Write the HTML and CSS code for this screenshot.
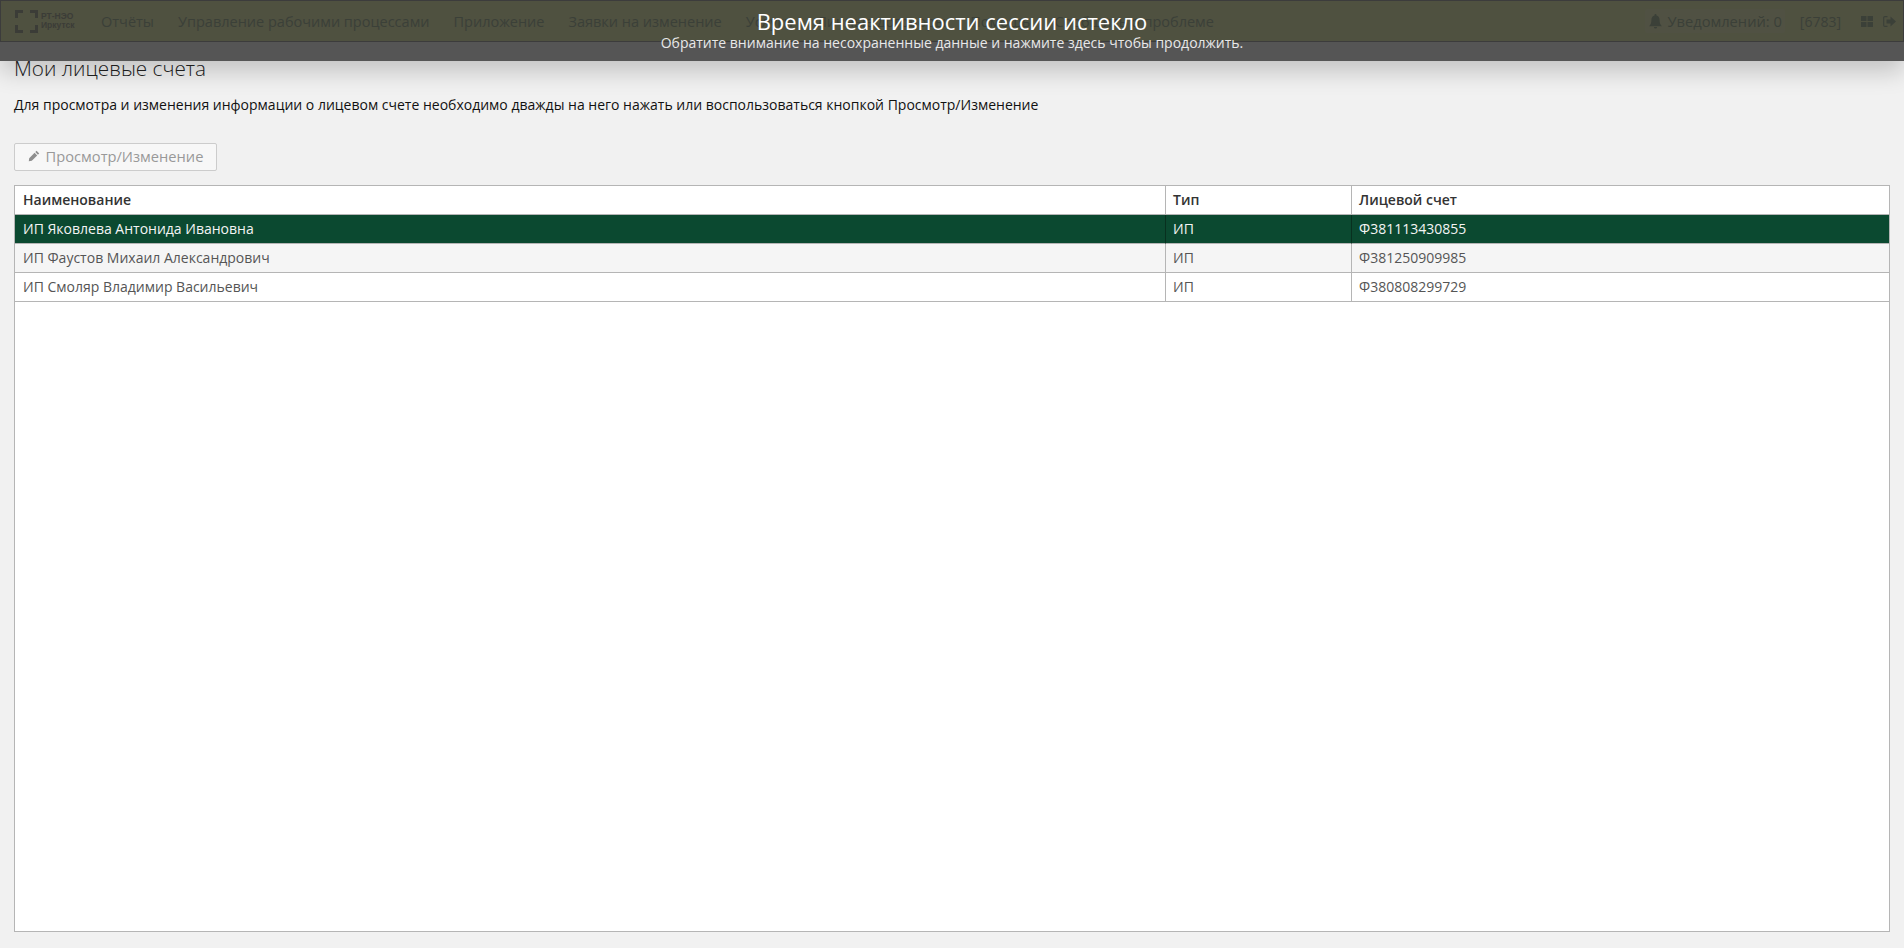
FILE: index.html
```html
<!DOCTYPE html>
<html lang="en">

<head>
    <meta charset="UTF-8">
    <title>Мои лицевые счета</title>
    <link rel="stylesheet" href="styles.css">
</head>

<body>
    <div class="topbar">
        <a class="logo" href="#">
            <svg width="23" height="23" viewBox="0 0 23 23">
                <path d="M1.500 8V1.500H8M15 1.500h6.500V8M21.500 15v6.500H15M8 21.500H1.500V15" fill="none" stroke="#a8ab9c" stroke-width="3"/>
            </svg>
            <span class="logoText">РТ-НЭО<br>Иркутск</span>
        </a>
        <ul class="nav">
            <li>Отчёты</li>
            <li>Управление рабочими процессами</li>
            <li>Приложение</li>
            <li>Заявки на изменение</li>
            <li>Услуги</li>
            <li>Личные договоры</li>
            <li>Помощь</li>
            <li>Сообщить о проблеме</li>
        </ul>
        <div class="userBox">
            <span class="notice">
                <svg width="13" height="15" viewBox="0 0 13 15"><path d="M6.500 0c-.6 0-1 .4-1 1v.6C3.400 2.100 2.400 3.800 2.400 5.800c0 3.600-.8 5-2.400 6.400h13c-1.600-1.400-2.400-2.800-2.400-6.400 0-2-1-3.700-3.100-4.200V1c0-.6-.4-1-1-1zM4.900 13a1.600 1.600 0 0 0 3.200 0z" fill="#a7b5a0"/></svg>
                Уведомлений: 0
            </span>
            <span class="account">[6783]</span>
            <svg class="gridIcon" width="12" height="11" viewBox="0 0 12 11"><path d="M0 0h5.500v5H0zM6.500 0H12v5H6.500zM0 6h5.500v5H0zM6.500 6H12v5H6.500z" fill="#a7b5a0"/></svg>
            <svg class="exitIcon" width="13" height="11" viewBox="0 0 13 11"><path d="M4.500.7H1.800q-1.100 0-1.100 1.100v7.400q0 1.100 1.100 1.100h2.700" fill="none" stroke="#a7b5a0" stroke-width="1.200"/><path d="M7.500.5l5.500 5-5.500 5V7.500H3.500v-4h4z" fill="#a7b5a0"/></svg>
        </div>
    </div>

    <div class="sessionBox">
        <h3>Время неактивности сессии истекло</h3>
        <p>Обратите внимание на несохраненные данные и нажмите здесь чтобы продолжить.</p>
    </div>

    <div class="content">
        <h1>Мои лицевые счета</h1>
        <p class="hint">Для просмотра и изменения информации о лицевом счете необходимо дважды на него нажать или воспользоваться кнопкой Просмотр/Изменение</p>
        <a class="btn" href="#">
            <svg width="12" height="12" viewBox="0 0 12 12"><path d="M8.600.8l2.600 2.600-1.300 1.300-2.600-2.600zM6.600 2.800l2.600 2.600-5.400 5.400L.8 11.200l.4-3z" fill="#8e8e8e"/></svg>
            Просмотр/Изменение
        </a>
        <div class="gridBox">
            <table>
                <colgroup>
                    <col class="colName">
                    <col class="colType">
                    <col>
                </colgroup>
                <thead>
                    <tr>
                        <th>Наименование</th>
                        <th>Тип</th>
                        <th>Лицевой счет</th>
                    </tr>
                </thead>
                <tbody>
                    <tr class="active">
                        <td>ИП Яковлева Антонида Ивановна</td>
                        <td>ИП</td>
                        <td>Ф381113430855</td>
                    </tr>
                    <tr class="odd">
                        <td>ИП Фаустов Михаил Александрович</td>
                        <td>ИП</td>
                        <td>Ф381250909985</td>
                    </tr>
                    <tr>
                        <td>ИП Смоляр Владимир Васильевич</td>
                        <td>ИП</td>
                        <td>Ф380808299729</td>
                    </tr>
                </tbody>
            </table>
        </div>
    </div>
</body>

</html>
```

FILE: styles.css
```css
* {
    margin: 0;
    padding: 0;
    box-sizing: border-box;
    font-family: 'Open Sans', 'Noto Sans', sans-serif;
}

html,
body {
    height: 100%;
}

a {
    text-decoration: none;
}

body {
    background: #f1f1f1;
    display: flex;
    flex-direction: column;
    overflow: hidden;
    position: relative;
}

.topbar {
    height: 42px;
    flex: none;
    display: flex;
    align-items: center;
    padding: 0 7px 0 14px;
    background: #e0e4b6;
    border: 1px solid #aaa;
    color: #a7b5a0;
}

.logo {
    display: flex;
    align-items: center;
    gap: 3px;
    width: 86px;
    color: #a8ab9c;
}

.logoText {
    font-size: 8.500px;
    line-height: 9px;
    font-weight: bold;
    font-family: 'Liberation Sans', sans-serif;
}

.nav {
    display: flex;
    gap: 24px;
    list-style: none;
    font-size: 14.500px;
    white-space: nowrap;
}

.userBox {
    margin-left: auto;
    display: flex;
    align-items: center;
    font-size: 11pt;
}

.notice {
    display: flex;
    align-items: center;
    gap: 6px;
    height: 24px;
    padding: 0 3px 0 4px;
    background: rgba(255, 255, 255, .1);
    border-radius: 2px;
}

.account {
    margin-left: 15px;
    font-size: 14px;
}

.gridIcon {
    margin-left: 20px;
}

.exitIcon {
    margin-left: 10px;
}

.sessionBox {
    position: absolute;
    left: 0;
    top: 0;
    width: 100%;
    height: 61px;
    padding-top: 7px;
    background: rgba(0, 0, 0, .647);
    box-shadow: 0 10px 25px rgba(0, 0, 0, .2);
    text-align: center;
    color: #fff;
}

.sessionBox h3 {
    font-size: 22px;
    line-height: 28px;
    font-weight: normal;
}

.sessionBox p {
    font-size: 14px;
    line-height: 15px;
    color: #e8e8e8;
}

.content {
    flex: 1;
    min-height: 0;
    display: flex;
    flex-direction: column;
    align-items: flex-start;
    padding: 13px 14px 16px;
}

.content h1 {
    font-size: 20.700px;
    line-height: 27px;
    font-weight: 300;
    color: #222;
}

.hint {
    margin-top: 14px;
    font-size: 14px;
    line-height: 18px;
    color: #111;
}

.btn {
    margin-top: 29px;
    height: 28px;
    width: 203px;
    display: flex;
    align-items: center;
    justify-content: center;
    gap: 6px;
    padding-bottom: 2px;
    border: 1px solid #ccc;
    border-radius: 2px;
    background: #f7f7f7;
    font-size: 11pt;
    color: #999;
}

.gridBox {
    margin-top: 14px;
    flex: 1;
    width: 100%;
    min-height: 0;
    border: 1px solid #b5b5b5;
    background: #fff;
}

table {
    width: 100%;
    table-layout: fixed;
    border-collapse: separate;
    border-spacing: 0;
    font-size: 14px;
}

.colName {
    width: 1151px;
}

.colType {
    width: 186px;
}

th,
td {
    height: 29px;
    padding: 0 7px 2px;
    text-align: left;
    border-bottom: 1px solid #b5b5b5;
    border-right: 1px solid #b5b5b5;
    white-space: nowrap;
}

th:first-child,
td:first-child {
    padding-left: 8px;
}

th:last-child,
td:last-child {
    border-right: 0;
}

th {
    font-weight: 600;
    color: #333;
}

td {
    color: #555;
}

.odd td {
    background: #f5f5f5;
}

.active td {
    background: #0b4930;
    color: #f4f4f4;
    border-right-color: #08301f;
}
```
